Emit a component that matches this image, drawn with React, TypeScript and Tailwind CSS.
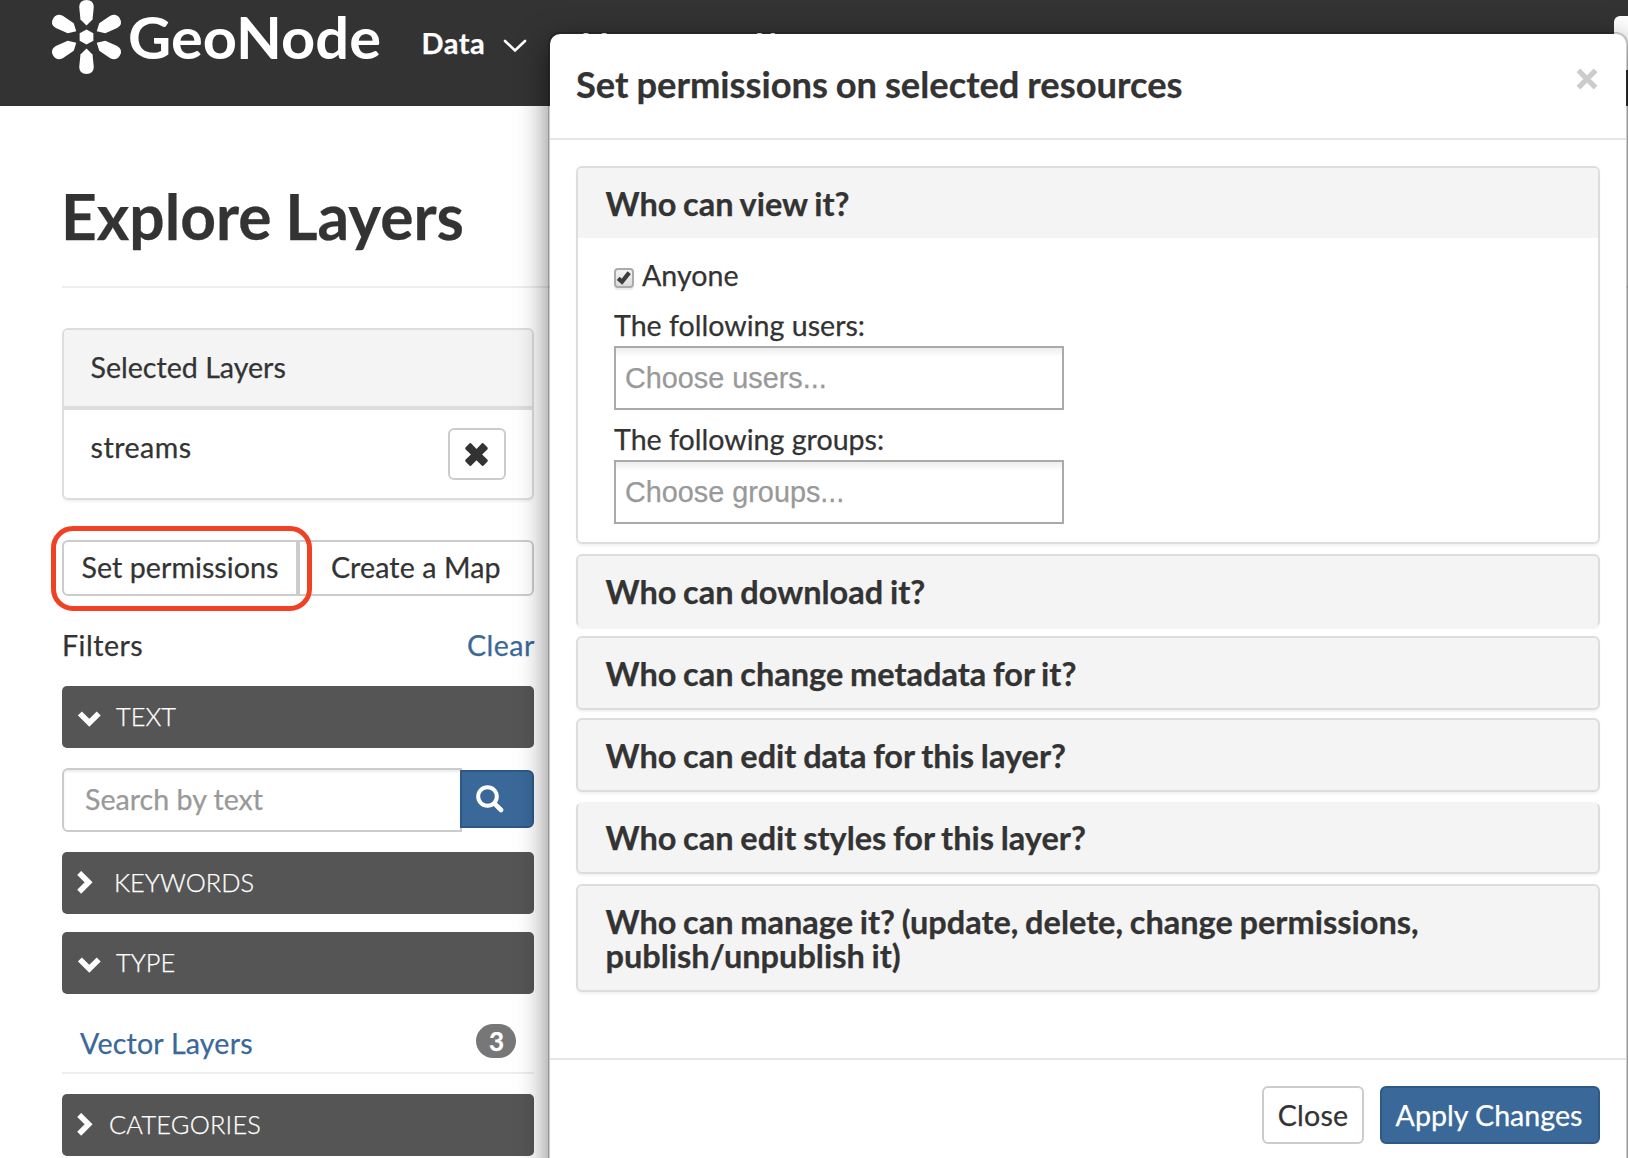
import React from "react";

const PETAL = "M86.8 25.6 L81 19.5 L79.8 7 Q80 0 86.8 0 Q93.6 0 93.8 7 L92.6 19.5 Z";

function Logo() {
  return (
    <svg width="350" height="80" viewBox="46 0 350 80" className="shrink-0 text-white">
      <g fill="currentColor">
        <g transform="translate(86.5 0) scale(1.04 1) translate(-86.8 0)">
          <path d="M86.8 29.5 L93.4 33.2 V40.8 L86.8 44.5 L80.2 40.8 V33.2 Z" />
          {[0, 60, 120, 180, 240, 300].map((a) => (
            <path key={a} d={PETAL} transform={`rotate(${a} 86.8 37)`} />
          ))}
        </g>
        <text
          x="128"
          y="58.6"
          fontFamily="Lato, sans-serif"
          fontWeight="700"
          fontSize="58"
          textLength="253"
          lengthAdjust="spacingAndGlyphs"
        >
          GeoNode
        </text>
      </g>
    </svg>
  );
}

function FilterBar({ label, open, className }: { label: string; open?: boolean; className: string }) {
  return (
    <div className={`flex h-[62px] shrink-0 items-center rounded-[5px] bg-[#555] pb-0.5 text-[25.4px] font-light text-white ${open ? "pl-4" : "pl-[15px]"} ${className}`}>
      <svg width="24" height="24" viewBox="0 0 24 24" className="mt-0.5 shrink-0" fill="none" stroke="currentColor" strokeWidth="5.6">
        {open ? <path d="M1.9 8.4 L11.3 17.8 L20.7 8.4" /> : <path d="M2.2 1.9 L11.6 11.3 L2.2 20.7" />}
      </svg>
      <span className="whitespace-nowrap">{label}</span>
    </div>
  );
}

function Sidebar() {
  return (
    <div className="ml-[62px] flex w-[472px] flex-col">
      <div className="flex h-[172px] shrink-0 flex-col overflow-hidden rounded-md border-2 border-[#ddd] shadow-[0_2px_2px_rgba(0,0,0,0.05)]">
        <div className="h-[80px] shrink-0 border-b-4 border-[#ddd] bg-[#f4f4f4] pl-[26.5px] pt-[17px]">Selected Layers</div>
        <div className="flex justify-between pl-[26.5px] pr-[26px] pt-[17px]">
          <span className="tracking-[0.5px]">streams</span>
          <button className="mt-px flex h-[52px] w-[58px] items-center justify-center rounded-md border-2 border-[#ccc] bg-white">
            <svg width="25" height="25" viewBox="0 0 24 24" fill="#333" className="mt-px -ml-px">
              <path d="M5.4 1.3 Q6.2 .8 7 1.4 L12 6.6 L17 1.4 Q17.8 .8 18.6 1.3 L22.6 5.3 Q23.1 6.1 22.6 6.9 L17.4 12 L22.6 17.1 Q23.1 17.9 22.6 18.7 L18.6 22.7 Q17.8 23.2 17 22.6 L12 17.4 L7 22.6 Q6.2 23.2 5.4 22.7 L1.4 18.7 Q.9 17.9 1.4 17.1 L6.6 12 L1.4 6.9 Q.9 6.1 1.4 5.3 Z" />
            </svg>
          </button>
        </div>
      </div>

      <div className="relative mt-10 flex h-14 shrink-0">
        <button className="flex w-[236px] items-center justify-center rounded-l-md border-2 border-[#ccc] bg-white pb-[3px] tracking-[0.05px]">Set permissions</button>
        <button className="flex w-[236px] items-center rounded-r-md border-2 border-[#ccc] bg-white pb-[3px] pl-[31px] tracking-[0.1px]">Create a Map</button>
        <div className="pointer-events-none absolute -left-[11px] -top-[14px] h-[85px] w-[261px] rounded-[22px] border-5 border-[#f04124]" />
      </div>

      <div className="mt-[29px] flex h-10 shrink-0 justify-between">
        <span className="tracking-[0.5px]">Filters</span>
        <a className="-mr-px tracking-[0.5px] text-[#3a6898]">Clear</a>
      </div>

      <FilterBar label="TEXT" open className="mt-[21px] gap-[14px]" />

      <div className="mt-5 flex h-16 shrink-0">
        <div className="flex w-[400px] items-center rounded-l-md border-2 border-[#ccc] pb-0.5 pl-[21px] text-[#999] shadow-[inset_0_2px_2px_rgba(0,0,0,0.075)]">
          Search by text
        </div>
        <button className="-ml-0.5 mt-0.5 flex h-[58px] w-[74px] items-center rounded-r-md border-2 border-[#2d5986] bg-[#3a6898] pl-[14px]">
          <svg width="28" height="28" viewBox="0 0 28 28" fill="none" stroke="white">
            <circle cx="11.5" cy="11.5" r="9.3" strokeWidth="4" />
            <path d="M18.8 18.8 L25 25" strokeWidth="4.6" strokeLinecap="round" />
          </svg>
        </button>
      </div>

      <FilterBar label="KEYWORDS" className="mt-5 gap-[13px]" />
      <FilterBar label="TYPE" open className="mt-[18px] gap-[14px]" />

      <div className="mt-[27px] flex h-[53px] shrink-0 items-start justify-between border-b-2 border-[#eee] pl-[18px] pr-[18px] pt-0.5">
        <a className="tracking-[0.2px] text-[#3a6898]">Vector Layers</a>
        <span className="mt-px flex h-[34px] w-10 items-center justify-center rounded-[17px] bg-[#777] pl-px text-[26px] font-bold text-white">3</span>
      </div>

      <FilterBar label="CATEGORIES" className="mt-5 gap-[8px] tracking-[0.2px]" />
    </div>
  );
}

function Panel({ title, className }: { title: string; className: string }) {
  return (
    <div className={`flex shrink-0 items-center rounded-md border-2 border-[#ddd] bg-[#f4f4f4] pl-[27.5px] text-[32.5px] leading-[34px] font-bold [word-spacing:-1.2px] shadow-[0_2px_2px_rgba(0,0,0,0.05)] ${className}`}>
      <div className="max-w-[900px] whitespace-normal">{title}</div>
    </div>
  );
}

function Chooser({ text }: { text: string }) {
  return (
    <div className="mt-px flex h-16 w-[450px] items-center border-2 border-[#aaa] bg-[linear-gradient(#eee_1%,#fff_15%)] pl-[9px] font-['Liberation_Sans',sans-serif] text-[28.8px] text-[#999]">
      {text}
    </div>
  );
}

function Modal() {
  return (
    <div className="absolute left-[548px] top-8 flex h-[1200px] w-[1080px] flex-col rounded-xl border-2 border-black/20 bg-white bg-clip-padding shadow-[0_10px_30px_rgba(0,0,0,0.5)]">
      <div className="flex h-[106px] shrink-0 justify-between border-b-2 border-[#e5e5e5] pl-[26px] pr-[28px] pt-[30px]">
        <h4 className="text-[36.3px] leading-10 font-bold [word-spacing:-1px]">Set permissions on selected resources</h4>
        <svg width="22" height="22" viewBox="0 0 22 22" className="mt-1" stroke="#ccc" strokeWidth="5.2">
          <path d="M2.4 2.4 L19.6 19.6 M19.6 2.4 L2.4 19.6" />
        </svg>
      </div>

      <div className="flex h-[918px] shrink-0 flex-col px-[26px] pt-[26px]">
        <div className="h-[378px] shrink-0 overflow-hidden rounded-md border-2 border-[#ddd] shadow-[0_2px_2px_rgba(0,0,0,0.05)]">
          <div className="h-[70px] bg-[#f4f4f4] pl-[27.5px] pt-4 text-[32.5px] font-bold [word-spacing:-1.2px]">Who can view it?</div>
          <div className="flex flex-col pl-9 pt-[17px]">
            <label className="flex items-center gap-2">
              <span className="mt-[5px] flex h-5 w-5 items-center justify-center rounded-[4px] border-2 border-[#aaa] bg-linear-to-b from-[#f3f3f3] to-[#dcdcdc] shadow-[0_2px_1px_rgba(0,0,0,0.08)]">
                <svg width="16" height="16" viewBox="0 0 16 16" fill="none" stroke="#3c3c3c" strokeWidth="4.2" className="shrink-0">
                  <path d="M2.2 8.4 L6 11.8 L13.2 2.6" />
                </svg>
              </span>
              Anyone
            </label>
            <div className="mt-2.5">The following users:</div>
            <Chooser text="Choose users..." />
            <div className="mt-[9px]">The following groups:</div>
            <Chooser text="Choose groups..." />
          </div>
        </div>
        <Panel title="Who can download it?" className="mt-2.5 h-[73px] border-b-[#f4f4f4] pt-[3px]" />
        <Panel title="Who can change metadata for it?" className="mt-[9px] h-[74px] pt-0.5" />
        <Panel title="Who can edit data for this layer?" className="mt-2 h-[74px] pt-0.5" />
        <Panel title="Who can edit styles for this layer?" className="mt-2.5 h-[72px] border-t-[#f4f4f4]" />
        <Panel title="Who can manage it? (update, delete, change permissions, publish/unpublish it)" className="mt-2.5 h-[108px] pt-0.5" />
      </div>

      <div className="flex shrink-0 justify-end gap-4 border-t-2 border-[#e5e5e5] px-[26px] pt-[26px]">
        <button className="flex h-[58px] w-[102px] items-center justify-center rounded-md border-2 border-[#ccc] bg-white tracking-[0.2px]">Close</button>
        <button className="flex h-[58px] w-[220px] items-center justify-center rounded-md border-2 border-[#2d5986] bg-[#3a6898] pr-0.5 text-white">
          Apply Changes
        </button>
      </div>
    </div>
  );
}

export default function App() {
  return (
    <div className="relative h-[1158px] w-[1628px] overflow-hidden bg-white font-['Lato',sans-serif] text-[28.6px] leading-10 whitespace-nowrap text-[#333] [-webkit-text-stroke:0.25px]">
      <header className="flex h-[106px] items-start bg-[#333] pl-[46px] text-white">
        <Logo />
        <nav className="flex flex-1 pl-[25.5px] pt-[23px] font-bold">
          <span className="w-[87px] text-[29px] tracking-[0.5px]">Data</span>
          <svg width="24" height="16" viewBox="0 0 24 16" className="mr-[50px] mt-[14.5px] -ml-[6px] shrink-0" fill="none" stroke="white" strokeWidth="2.6" strokeLinecap="round">
            <path d="M2 3 L12 12.4 L22 3" />
          </svg>
          <span className="w-[173px] pl-[5px]">Maps</span>
          <span>About</span>
        </nav>
        <div className="mt-4 h-[54px] w-[14px] rounded-l-md bg-white" />
      </header>

      <main>
        <h1 className="ml-[62px] mb-10 h-[182px] border-b-2 border-[#eee] pt-[77px] -indent-px text-[62.3px] leading-[66px] font-bold [word-spacing:-1.5px]">Explore Layers</h1>
        <Sidebar />
      </main>

      <Modal />
    </div>
  );
}
